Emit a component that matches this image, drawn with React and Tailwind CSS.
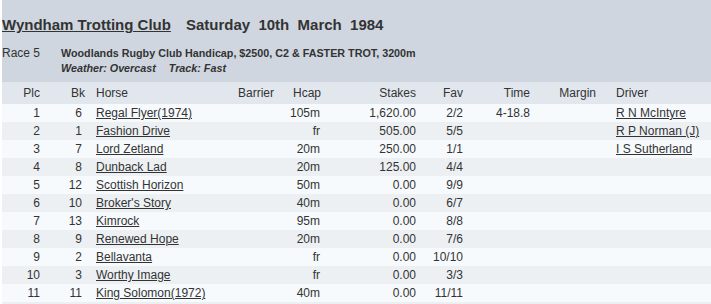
import React from 'react';

const rows = [
    { plc: '1', bk: '6', horse: 'Regal Flyer(1974)', hcap: '105m', stakes: '1,620.00', fav: '2/2', time: '4-18.8', driver: 'R N McIntyre' },
    { plc: '2', bk: '1', horse: 'Fashion Drive', hcap: 'fr', stakes: '505.00', fav: '5/5', driver: 'R P Norman (J)' },
    { plc: '3', bk: '7', horse: 'Lord Zetland', hcap: '20m', stakes: '250.00', fav: '1/1', driver: 'I S Sutherland' },
    { plc: '4', bk: '8', horse: 'Dunback Lad', hcap: '20m', stakes: '125.00', fav: '4/4' },
    { plc: '5', bk: '12', horse: 'Scottish Horizon', hcap: '50m', stakes: '0.00', fav: '9/9' },
    { plc: '6', bk: '10', horse: "Broker's Story", hcap: '40m', stakes: '0.00', fav: '6/7' },
    { plc: '7', bk: '13', horse: 'Kimrock', hcap: '95m', stakes: '0.00', fav: '8/8' },
    { plc: '8', bk: '9', horse: 'Renewed Hope', hcap: '20m', stakes: '0.00', fav: '7/6' },
    { plc: '9', bk: '2', horse: 'Bellavanta', hcap: 'fr', stakes: '0.00', fav: '10/10' },
    { plc: '10', bk: '3', horse: 'Worthy Image', hcap: 'fr', stakes: '0.00', fav: '3/3' },
    { plc: '11', bk: '11', horse: 'King Solomon(1972)', hcap: '40m', stakes: '0.00', fav: '11/11' },
];

const cols = 'grid grid-cols-[42px_46px_140px_48px_47px_95px_47px_67px_66px_1fr]';

export default function App() {
    return (
        <div className="ml-[2px] font-['Liberation_Sans',Arial,sans-serif] text-[#333]">
            {/* meeting header */}
            <div className="bg-[#cfd6df] pt-[16px] pb-[6px]">
                <div className="text-[15px] leading-[18px] font-bold whitespace-pre">
                    <span className="underline">Wyndham Trotting Club</span>
                    <span className="ml-[15px]">Saturday  10th  March  1984</span>
                </div>
                <div className="flex mt-[12px]">
                    <div className="w-[59px] text-[12px] leading-[15px]">Race 5</div>
                    <div className="text-[10.75px] leading-[15px] font-bold">
                        <div>Woodlands Rugby Club Handicap, $2500, C2 &amp; FASTER TROT, 3200m</div>
                        <div className="italic">
                            <span>Weather: Overcast</span>
                            <span className="ml-[13px]">Track: Fast</span>
                        </div>
                    </div>
                </div>
            </div>

            {/* results table */}
            <div className={`${cols} bg-[#e2e7ee] h-[22px] items-center text-[12px]`}>
                <div className="text-right pr-[4px]">Plc</div>
                <div className="text-right pr-[5px]">Bk</div>
                <div className="pl-[6px]">Horse</div>
                <div className="text-right pr-[4px]">Barrier</div>
                <div className="text-right pr-[4px]">Hcap</div>
                <div className="text-right pr-[4px]">Stakes</div>
                <div className="text-right pr-[4px]">Fav</div>
                <div className="text-right pr-[4px]">Time</div>
                <div className="text-right pr-[4px]">Margin</div>
                <div className="pl-[16px]">Driver</div>
            </div>
            {rows.map((r, i) => (
                <div
                    key={i}
                    className={`${cols} h-[18px] items-center text-[12px] ${i % 2 === 0 ? 'bg-[#f7fafd]' : 'bg-[#edf0f3]'}`}
                >
                    <div className="text-right pr-[4px]">{r.plc}</div>
                    <div className="text-right pr-[8px]">{r.bk}</div>
                    <div className="pl-[6px] whitespace-nowrap"><a href="#" className="underline">{r.horse}</a></div>
                    <div className="text-right pr-[4px]"></div>
                    <div className="text-right pr-[5px]">{r.hcap}</div>
                    <div className="text-right pr-[4px]">{r.stakes}</div>
                    <div className="text-right pr-[4px]">{r.fav}</div>
                    <div className="text-right pr-[4px]">{r.time}</div>
                    <div className="text-right pr-[4px]"></div>
                    <div className="pl-[16px] whitespace-nowrap">
                        {r.driver && <a href="#" className="underline">{r.driver}</a>}
                    </div>
                </div>
            ))}
            {/* next row, starts at the bottom edge */}
            <div className="h-[18px] bg-[#edf0f3]"></div>
        </div>
    );
}
